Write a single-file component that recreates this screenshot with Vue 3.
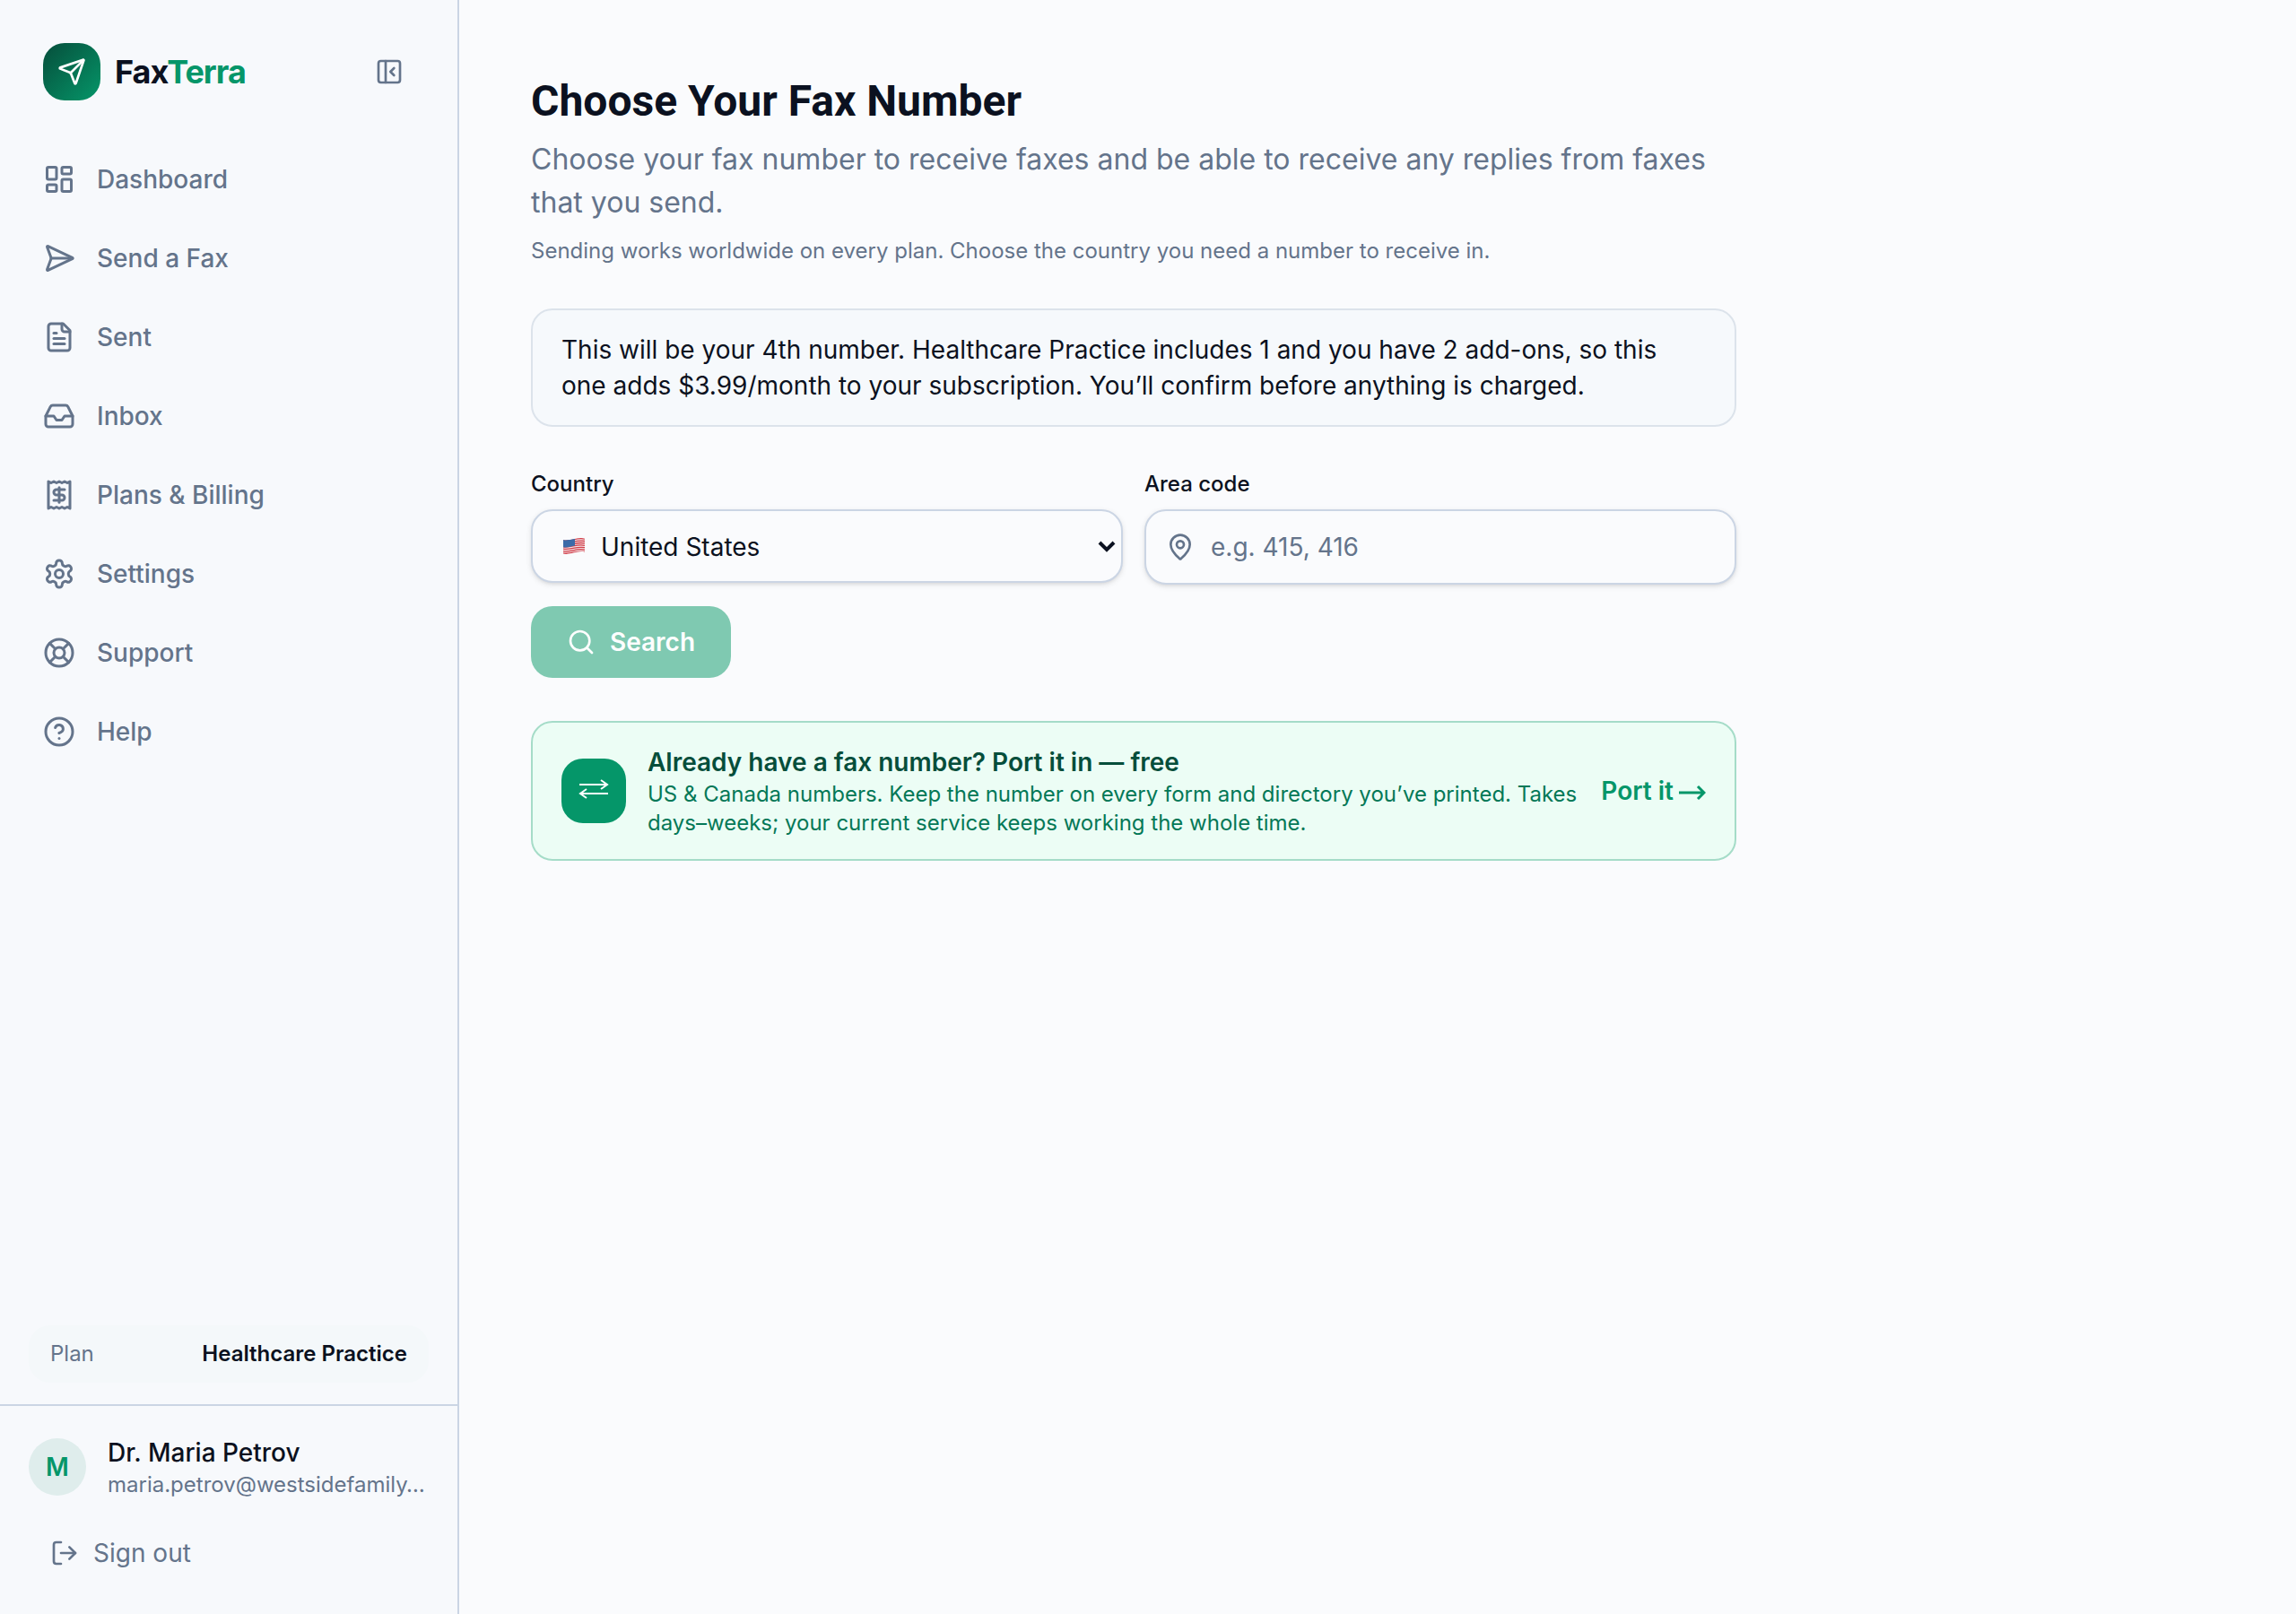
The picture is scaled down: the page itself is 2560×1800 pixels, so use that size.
<script setup>
import { ref } from 'vue'

const icons = {
  dashboard: '<rect width="7" height="9" x="3" y="3" rx="1"/><rect width="7" height="5" x="14" y="3" rx="1"/><rect width="7" height="9" x="14" y="12" rx="1"/><rect width="7" height="5" x="3" y="16" rx="1"/>',
  send: '<path d="M3.714 3.048a.498.498 0 0 0-.683.627l2.843 7.627a2 2 0 0 1 0 1.396l-2.842 7.627a.498.498 0 0 0 .682.627l18-8.5a.5.5 0 0 0 0-.904z"/><path d="M6 12h16"/>',
  file: '<path d="M15 2H6a2 2 0 0 0-2 2v16a2 2 0 0 0 2 2h12a2 2 0 0 0 2-2V7Z"/><path d="M14 2v4a2 2 0 0 0 2 2h4"/><path d="M10 9H8"/><path d="M16 13H8"/><path d="M16 17H8"/>',
  inbox: '<path d="M22 12h-6l-2 3h-4l-2-3H2"/><path d="M5.45 5.11 2 12v6a2 2 0 0 0 2 2h16a2 2 0 0 0 2-2v-6l-3.45-6.89A2 2 0 0 0 16.76 4H7.24a2 2 0 0 0-1.79 1.11z"/>',
  receipt: '<path d="M4 2v20l2-1 2 1 2-1 2 1 2-1 2 1 2-1 2 1V2l-2 1-2-1-2 1-2-1-2 1-2-1-2 1Z"/><path d="M16 8h-6a2 2 0 1 0 0 4h4a2 2 0 1 1 0 4H8"/><path d="M12 17.5v-11"/>',
  settings: '<path d="M12.22 2h-.44a2 2 0 0 0-2 2v.18a2 2 0 0 1-1 1.73l-.43.25a2 2 0 0 1-2 0l-.15-.08a2 2 0 0 0-2.73.73l-.22.38a2 2 0 0 0 .73 2.73l.15.1a2 2 0 0 1 1 1.72v.51a2 2 0 0 1-1 1.74l-.15.09a2 2 0 0 0-.73 2.73l.22.38a2 2 0 0 0 2.73.73l.15-.08a2 2 0 0 1 2 0l.43.25a2 2 0 0 1 1 1.73V20a2 2 0 0 0 2 2h.44a2 2 0 0 0 2-2v-.18a2 2 0 0 1 1-1.73l.43-.25a2 2 0 0 1 2 0l.15.08a2 2 0 0 0 2.73-.73l.22-.39a2 2 0 0 0-.73-2.73l-.15-.08a2 2 0 0 1-1-1.74v-.5a2 2 0 0 1 1-1.74l.15-.09a2 2 0 0 0 .73-2.73l-.22-.38a2 2 0 0 0-2.73-.73l-.15.08a2 2 0 0 1-2 0l-.43-.25a2 2 0 0 1-1-1.73V4a2 2 0 0 0-2-2z"/><circle cx="12" cy="12" r="3"/>',
  support: '<circle cx="12" cy="12" r="10"/><path d="m4.93 4.93 4.24 4.24"/><path d="m14.83 9.17 4.24-4.24"/><path d="m14.83 14.83 4.24 4.24"/><path d="m9.17 14.83-4.24 4.24"/><circle cx="12" cy="12" r="4"/>',
  help: '<circle cx="12" cy="12" r="10"/><path d="M9.09 9a3 3 0 0 1 5.83 1c0 2-3 3-3 3"/><path d="M12 17h.01"/>',
}

const nav = [
  { label: 'Dashboard', icon: 'dashboard' },
  { label: 'Send a Fax', icon: 'send' },
  { label: 'Sent', icon: 'file' },
  { label: 'Inbox', icon: 'inbox' },
  { label: 'Plans & Billing', icon: 'receipt' },
  { label: 'Settings', icon: 'settings' },
  { label: 'Support', icon: 'support' },
  { label: 'Help', icon: 'help' },
]

const country = ref('US')
const areaCode = ref('')
</script>

<template>
  <div class="app">
    <aside class="sidebar">
      <header class="brand-row">
        <a class="brand" href="#">
          <span class="brand-mark">
            <svg class="icon brand-icon" viewBox="0 0 24 24" aria-hidden="true">
              <path d="M14.536 21.686a.5.5 0 0 0 .937-.024l6.5-19a.496.496 0 0 0-.635-.635l-19 6.5a.5.5 0 0 0-.024.937l7.93 3.18a2 2 0 0 1 1.112 1.11z" />
              <path d="m21.854 2.147-10.94 10.939" />
            </svg>
          </span>
          <span class="brand-name">Fax<span class="brand-accent">Terra</span></span>
        </a>
        <button class="collapse" type="button" aria-label="Collapse sidebar">
          <svg class="icon icon-sm" viewBox="0 0 24 24" aria-hidden="true">
            <rect width="18" height="18" x="3" y="3" rx="2" />
            <path d="M9 3v18" />
            <path d="m16 15-3-3 3-3" />
          </svg>
        </button>
      </header>

      <nav class="nav">
        <a v-for="item in nav" :key="item.label" class="nav-link" href="#">
          <svg class="icon icon-nav" viewBox="0 0 24 24" aria-hidden="true" v-html="icons[item.icon]"></svg>
          <span>{{ item.label }}</span>
        </a>
      </nav>

      <div class="plan-wrap">
        <div class="plan">
          <span class="plan-label">Plan</span>
          <span class="plan-name">Healthcare Practice</span>
        </div>
      </div>

      <footer class="account">
        <div class="profile">
          <span class="avatar">M</span>
          <div class="profile-text">
            <div class="profile-name">Dr. Maria Petrov</div>
            <div class="profile-email">maria.petrov@westsidefamily…</div>
          </div>
        </div>
        <button class="signout" type="button">
          <svg class="icon icon-sm" viewBox="0 0 24 24" aria-hidden="true">
            <path d="M9 21H5a2 2 0 0 1-2-2V5a2 2 0 0 1 2-2h4" />
            <path d="m16 17 5-5-5-5" />
            <path d="M21 12H9" />
          </svg>
          <span>Sign out</span>
        </button>
      </footer>
    </aside>

    <main class="main">
      <div class="content">
        <h1 class="title">Choose Your Fax Number</h1>
        <p class="lead">Choose your fax number to receive faxes and be able to receive any replies from faxes that you send.</p>
        <p class="hint">Sending works worldwide on every plan. Choose the country you need a number to receive in.</p>

        <p class="notice">This will be your 4th number. Healthcare Practice includes 1 and you have 2 add-ons, so this one adds $3.99/month to your subscription. You’ll confirm before anything is charged.</p>

        <form class="search" @submit.prevent>
          <div class="field">
            <label class="label" for="country">Country</label>
            <div class="control">
              <svg class="flag" viewBox="0 0 24 18" aria-hidden="true">
                <defs>
                  <clipPath id="flag-shape">
                    <path d="M0 2C8 3.500 15 -1.500 24 .5V15.500C15 13.500 8 19.500 0 17.500Z" />
                  </clipPath>
                </defs>
                <g clip-path="url(#flag-shape)">
                  <rect width="24" height="18" fill="#f3e6e8" />
                  <g fill="none" stroke="#d23c48" stroke-width="1.300">
                    <path d="M0 2.600C8 4.100 15 -.9 24 1.100" />
                    <path d="M0 5C8 6.500 15 1.500 24 3.500" />
                    <path d="M0 7.400C8 8.900 15 3.900 24 5.900" />
                    <path d="M0 9.800C8 11.300 15 6.300 24 8.300" />
                    <path d="M0 12.200C8 13.700 15 8.700 24 10.700" />
                    <path d="M0 14.600C8 16.100 15 11.100 24 13.100" />
                    <path d="M0 17C8 18.500 15 13.500 24 15.500" />
                  </g>
                  <path d="M0 2C5 2.800 9 1 13 .3V8.600C9 9.500 5 11 0 10.300Z" fill="#3c6ba8" />
                </g>
              </svg>
              <select id="country" v-model="country" class="input select">
                <option value="US">United States</option>
                <option value="CA">Canada</option>
              </select>
              <svg class="chevron" viewBox="0 0 20 16" aria-hidden="true">
                <path d="m2 4 8 8 8-8" />
              </svg>
            </div>
          </div>
          <div class="field">
            <label class="label" for="area">Area code</label>
            <div class="control">
              <svg class="icon pin" viewBox="0 0 24 24" aria-hidden="true">
                <path d="M20 10c0 4.993-5.539 10.193-7.399 11.799a1 1 0 0 1-1.202 0C9.539 20.193 4 14.993 4 10a8 8 0 0 1 16 0" />
                <circle cx="12" cy="10" r="3" />
              </svg>
              <input id="area" v-model="areaCode" class="input area" type="text" placeholder="e.g. 415, 416" />
            </div>
          </div>
          <button class="submit" type="submit" disabled>
            <svg class="icon icon-sm" viewBox="0 0 24 24" aria-hidden="true">
              <circle cx="11" cy="11" r="8" />
              <path d="m21 21-4.3-4.3" />
            </svg>
            <span>Search</span>
          </button>
        </form>

        <a class="port" href="#">
          <span class="port-mark">
            <svg class="swap" viewBox="0 2 36 26" aria-hidden="true">
              <path d="M2 8h31M26 3l7 5-7 5" />
              <path d="M34 18H3M10 13l-7 5 7 5" />
            </svg>
          </span>
          <span class="port-text">
            <span class="port-title">Already have a fax number? Port it in — free</span>
            <span class="port-copy">US &amp; Canada numbers. Keep the number on every form and directory you’ve printed. Takes days–weeks; your current service keeps working the whole time.</span>
          </span>
          <span class="port-action">
            <span>Port it</span>
            <svg class="arrow" viewBox="0 0 30 20" aria-hidden="true">
              <path d="M0 12h28M21 5l7 7-7 7" />
            </svg>
          </span>
        </a>
      </div>
    </main>
  </div>
</template>

<style>
body {
  background: #fafbfd;
}
</style>

<style scoped>
.app {
  display: flex;
  min-height: 100vh;
  font-family: Inter, "Liberation Sans", sans-serif;
  font-size: 28px;
  line-height: 40px;
  color: #0b1120;
}

.app *,
.app *::before {
  box-sizing: border-box;
}

a {
  color: inherit;
  text-decoration: none;
}

button {
  border: 0;
  background: none;
  font: inherit;
  color: inherit;
  cursor: pointer;
}

.icon {
  flex: none;
  fill: none;
  stroke: currentColor;
  stroke-width: 2;
  stroke-linecap: round;
  stroke-linejoin: round;
}

.icon-sm {
  width: 32px;
  height: 32px;
}

.icon-nav {
  width: 36px;
  height: 36px;
}

.sidebar {
  display: flex;
  flex: none;
  flex-direction: column;
  width: 512px;
  border-right: 2px solid #cbd5e4;
  background: #f7f9fc;
}

.brand-row {
  display: flex;
  align-items: center;
  justify-content: space-between;
  height: 160px;
  padding: 0 48px;
}

.brand {
  display: flex;
  align-items: center;
  gap: 16px;
}

.brand-mark {
  display: flex;
  align-items: center;
  justify-content: center;
  width: 64px;
  height: 64px;
  border-radius: 24px;
  background: linear-gradient(135deg, #064e3b, #059669);
  color: #fff;
}

.brand-icon {
  width: 32px;
  height: 32px;
}

.brand-name {
  font-size: 36px;
  font-weight: 700;
  letter-spacing: -1px;
}

.brand-accent {
  color: #059669;
}

.collapse {
  display: flex;
  padding: 12px;
  color: #64748b;
}

.nav {
  display: flex;
  flex: 1;
  flex-direction: column;
  gap: 8px;
  padding: 0 24px;
}

.nav-link {
  display: flex;
  align-items: center;
  gap: 24px;
  padding: 20px 24px;
  font-weight: 500;
  color: #64748b;
}

.plan-wrap {
  padding: 0 32px 24px;
}

.plan {
  display: flex;
  align-items: center;
  justify-content: space-between;
  padding: 16px 24px;
  border-radius: 24px;
  background: #f4f8fa;
  font-size: 24px;
  line-height: 32px;
}

.plan-label {
  color: #64748b;
}

.plan-name {
  font-weight: 600;
}

.account {
  padding: 32px;
  border-top: 2px solid #cbd5e4;
}

.profile {
  display: flex;
  align-items: center;
  gap: 24px;
}

.avatar {
  display: flex;
  flex: none;
  align-items: center;
  justify-content: center;
  width: 64px;
  height: 64px;
  border-radius: 50%;
  background: #dfedec;
  font-weight: 600;
  color: #059669;
}

.profile-text {
  min-width: 0;
}

.profile-name {
  font-weight: 500;
}

.profile-email {
  font-size: 24px;
  line-height: 32px;
  white-space: nowrap;
  color: #64748b;
}

.signout {
  display: flex;
  align-items: center;
  gap: 16px;
  width: 100%;
  margin-top: 24px;
  padding: 16px 24px;
  color: #64748b;
}

.main {
  flex: 1;
  min-width: 0;
  padding: 80px;
}

.content {
  max-width: 1344px;
}

.title {
  margin: 0;
  font-family: Roboto, Inter, sans-serif;
  font-size: 48px;
  font-weight: 700;
  line-height: 66px;
}

.lead {
  margin: 8px 0 0;
  font-size: 32px;
  line-height: 48px;
  color: #64748b;
}

.hint {
  margin: 14px 0 0;
  font-size: 24px;
  line-height: 32px;
  color: #64748b;
}

.notice {
  margin: 48px 0 0;
  padding: 24px 32px;
  border: 2px solid #dce3eb;
  border-radius: 24px;
  background: #f6f9fc;
}

.search {
  display: grid;
  grid-template-columns: 1fr 1fr;
  gap: 24px;
  align-items: start;
  margin-top: 48px;
}

.label {
  display: block;
  margin-bottom: 12px;
  font-size: 24px;
  font-weight: 500;
  line-height: 32px;
}

.control {
  position: relative;
}

.input {
  display: block;
  width: 100%;
  margin: 0;
  border: 2px solid #cbd5e4;
  border-radius: 24px;
  outline: 0;
  appearance: none;
  background: #fafbfd;
  box-shadow: 0 2px 6px rgb(0 0 0 / 10%), 0 2px 4px -2px rgb(0 0 0 / 10%);
  font: inherit;
  color: inherit;
}

.select {
  height: 82px;
  padding: 2px 32px 0 76px;
}

.area {
  height: 84px;
  padding: 0 32px 0 72px;
}

.area::placeholder {
  opacity: 1;
  color: #64748b;
}

.flag,
.chevron,
.pin {
  position: absolute;
  top: 50%;
  transform: translateY(-50%);
  pointer-events: none;
}

.flag {
  left: 36px;
  width: 24px;
  height: 18px;
}

.chevron {
  right: 8px;
  width: 20px;
  height: 16px;
  fill: none;
  stroke: currentColor;
  stroke-width: 4;
}

.pin {
  left: 24px;
  width: 32px;
  height: 32px;
  color: #64748b;
}

.submit {
  display: flex;
  align-items: center;
  justify-self: start;
  gap: 16px;
  height: 80px;
  padding: 0 40px;
  border-radius: 24px;
  background: #7fc9b1;
  font-weight: 600;
  color: #fdfefe;
}

.port {
  display: flex;
  align-items: center;
  gap: 24px;
  margin-top: 48px;
  padding: 24px 32px;
  border: 2px solid #a5dcc8;
  border-radius: 24px;
  background: #ecfdf5;
}

.port-mark {
  display: flex;
  flex: none;
  align-items: center;
  justify-content: center;
  width: 72px;
  height: 72px;
  border-radius: 24px;
  background: #059669;
}

.swap {
  width: 36px;
  height: 26px;
  fill: none;
  stroke: #fff;
  stroke-width: 2;
}

.port-text {
  flex: 1;
}

.port-title,
.port-copy {
  display: block;
}

.port-title {
  font-weight: 600;
  color: #064e3b;
}

.port-copy {
  font-size: 24px;
  line-height: 32px;
  color: #047857;
}

.port-action {
  display: flex;
  flex: none;
  align-items: center;
  gap: 6px;
  font-weight: 600;
  color: #059669;
}

.arrow {
  width: 30px;
  height: 20px;
  fill: none;
  stroke: currentColor;
  stroke-width: 3;
}
</style>
